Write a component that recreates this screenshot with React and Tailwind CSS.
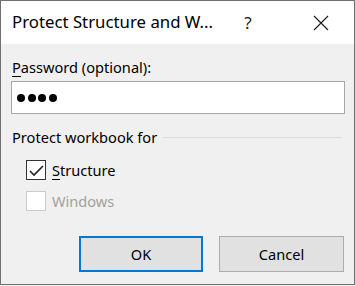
import React from "react";

export default function App() {
  const font = { fontFamily: '"Noto Sans", "Segoe UI", Arial, sans-serif' };
  return (
    <div className="w-[355px] h-[286px] bg-[#f0f0f0]" style={font}>
      <div className="w-[355px] h-[285px] border border-[#707070] bg-[#f0f0f0] flex flex-col">
        {/* title bar */}
        <div className="h-[43px] bg-white flex items-center shrink-0">
          <div className="ml-[11px] w-[215px] text-[16.8px] text-black leading-none whitespace-nowrap">
            Protect Structure and W...
          </div>
          <div className="ml-[15px] w-[12px] text-[17px] text-[#1a1a1a] leading-none text-center">?</div>
          <div className="ml-[59px] w-[16px] h-[16px] flex items-center justify-center">
            <svg width="16" height="16" viewBox="0 0 16 16">
              <path d="M1 1 L15 15 M15 1 L1 15" stroke="#1a1a1a" strokeWidth="1.1" fill="none" />
            </svg>
          </div>
        </div>
        {/* body */}
        <div className="flex flex-col px-[10px]">
          <div className="mt-[13px] h-[21px] flex items-center text-[14.6px] text-black leading-none pl-[1px]">
            <span className="underline underline-offset-[3px] decoration-1">P</span>assword (optional):
          </div>
          <div className="mt-[3px] h-[33px] w-[334px] bg-white border border-[#a8a8a8] flex items-center pl-[5px] gap-[2.5px]">
            {[0, 1, 2, 3].map((i) => (
              <span key={i} className="w-[8px] h-[8px] rounded-full bg-black inline-block" />
            ))}
          </div>
          <div className="mt-[13px] h-[20px] flex items-center">
            <span className="text-[14.6px] text-black leading-none pl-[1px] whitespace-nowrap">Protect workbook for</span>
            <div className="ml-[6px] mr-[2px] flex-1 h-[1px] bg-[#dcdcdc]" />
          </div>
          <div className="mt-[13px] h-[20px] flex items-center pl-[15px]">
            <div className="w-[20px] h-[20px] border border-[#333333] bg-white flex items-center justify-center">
              <svg width="18" height="18" viewBox="0 0 18 18">
                <path d="M3 10 L7 14 L16 5" stroke="#222" strokeWidth="1.6" fill="none" />
              </svg>
            </div>
            <span className="ml-[6px] text-[14.6px] text-black leading-none">
              <span className="underline underline-offset-[3px] decoration-1">S</span>tructure
            </span>
          </div>
          <div className="mt-[11px] h-[20px] flex items-center pl-[15px]">
            <div className="w-[20px] h-[20px] border border-[#cccccc] bg-white" />
            <span className="ml-[6px] text-[14.6px] text-[#a0a0a0] leading-none">Windows</span>
          </div>
          <div className="mt-[25px] flex pl-[68px] gap-[16px]">
            <div className="w-[124px] h-[36px] bg-[#e1e1e1] border-2 border-[#0078d7] flex items-center justify-center text-[14.6px] text-black leading-none">
              OK
            </div>
            <div className="w-[125px] h-[36px] bg-[#e1e1e1] border border-[#adadad] flex items-center justify-center text-[14.6px] text-black leading-none">
              Cancel
            </div>
          </div>
        </div>
      </div>
    </div>
  );
}
